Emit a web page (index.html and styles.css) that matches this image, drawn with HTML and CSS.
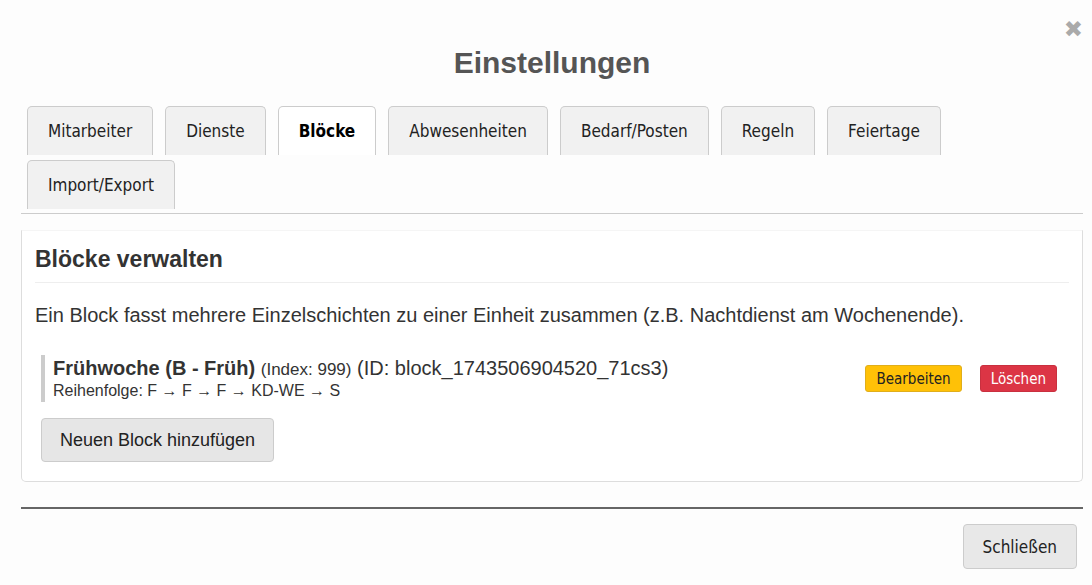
FILE: index.html
```html
<!DOCTYPE html>
<html lang="de">
<head>
<meta charset="utf-8">
<title>Einstellungen</title>
<link rel="stylesheet" href="styles.css">
</head>
<body>
<div class="modal">
  <span class="close">&#x2716;</span>
  <h2 class="title">Einstellungen</h2>
  <div class="tabs">
    <button class="tab">Mitarbeiter</button>
    <button class="tab">Dienste</button>
    <button class="tab active">Blöcke</button>
    <button class="tab">Abwesenheiten</button>
    <button class="tab">Bedarf/Posten</button>
    <button class="tab">Regeln</button>
    <button class="tab">Feiertage</button>
    <button class="tab">Import/Export</button>
  </div>
  <div class="panel">
    <h3 class="panel-title">Blöcke verwalten</h3>
    <p class="desc">Ein Block fasst mehrere Einzelschichten zu einer Einheit zusammen (z.B. Nachtdienst am Wochenende).</p>
    <div class="block">
      <div class="block-info">
        <div class="block-name"><strong>Frühwoche (B - Früh)</strong> <small>(Index: 999)</small> (ID: block_1743506904520_71cs3)</div>
        <div class="block-seq">Reihenfolge: F → F → F → KD-WE → S</div>
      </div>
      <div class="block-actions">
        <button class="btn-edit">Bearbeiten</button>
        <button class="btn-del">Löschen</button>
      </div>
    </div>
    <button class="btn-add">Neuen Block hinzufügen</button>
  </div>
  <div class="footer">
    <button class="btn-close">Schließen</button>
  </div>
</div>
</body>
</html>
```
FILE: styles.css
```css
html, body {
  margin: 0;
  padding: 0;
  background: #fdfdfd;
}
body {
  font-family: "Liberation Sans", Arial, sans-serif;
  color: #333;
}
button {
  font-family: "DejaVu Sans Condensed", "DejaVu Sans", sans-serif;
  font-stretch: condensed;
  cursor: pointer;
}
.modal {
  position: relative;
  padding: 46px 9px 0 21px;
}
.close {
  position: absolute;
  top: 16px;
  right: 9px;
  font-size: 23px;
  color: #aaa;
  font-family: "DejaVu Sans", sans-serif;
}
.title {
  margin: 0;
  text-align: center;
  font-size: 30px;
  line-height: 34px;
  font-weight: bold;
  color: #555;
}
.tabs {
  margin-top: 26px;
  padding-left: 6px;
  display: flex;
  flex-wrap: wrap;
  column-gap: 12px;
  row-gap: 5px;
  border-bottom: 1px solid #ccc;
  padding-bottom: 4px;
}
.tab {
  height: 49px;
  padding: 0 20px;
  font-size: 17px;
  color: #222;
  background: #f1f1f1;
  border: 1px solid #ccc;
  border-bottom: none;
  border-radius: 5px 5px 0 0;
}
.tab.active {
  background: #fff;
  font-weight: bold;
  color: #000;
}
.panel {
  margin-top: 16px;
  border: 1px solid #ddd;
  border-top-color: #f5f5f5;
  border-radius: 0 0 5px 5px;
  background: #fff;
  padding: 13px 13px 19px 13px;
}
.panel-title {
  margin: 0;
  font-size: 23px;
  line-height: 30px;
  font-weight: bold;
  color: #333;
  padding-bottom: 8px;
  border-bottom: 1px solid #eee;
}
.desc {
  margin: 16px 0 0 0;
  font-size: 20px;
  line-height: 32px;
  color: #333;
}
.block {
  margin: 24px 12px 0 6px;
  display: flex;
  align-items: center;
  justify-content: space-between;
}
.block-info {
  border-left: 4px solid #ccc;
  padding-left: 8px;
}
.block-name {
  font-size: 20px;
  line-height: 26px;
  color: #333;
}
.block-name small {
  font-size: 17px;
  line-height: 1;
}
.block-seq {
  font-size: 16px;
  line-height: 20px;
  color: #333;
  padding-bottom: 1px;
}
.block-actions {
  display: flex;
  gap: 18px;
}
.btn-edit, .btn-del {
  height: 27px;
  padding: 0 10px;
  font-size: 15px;
  border-radius: 3px;
}
.btn-edit {
  background: #ffc107;
  border: 1px solid #e0ae1b;
  color: #222;
}
.btn-del {
  background: #dc3545;
  border: 1px solid #c9303f;
  color: #fff;
}
.btn-add {
  margin: 16px 0 0 6px;
  height: 44px;
  padding: 0 18px;
  font-family: "Liberation Sans", Arial, sans-serif;
  font-stretch: normal;
  font-size: 18px;
  color: #222;
  background: #e6e6e6;
  border: 1px solid #ccc;
  border-radius: 4px;
}
.footer {
  margin-top: 25px;
  border-top: 2px solid #666;
  display: flex;
  justify-content: flex-end;
  padding: 15px 6px 0 0;
}
.btn-close {
  height: 45px;
  padding: 0 19px;
  font-size: 17px;
  color: #222;
  background: #e8e8e8;
  border: 1px solid #ccc;
  border-radius: 4px;
}
```
